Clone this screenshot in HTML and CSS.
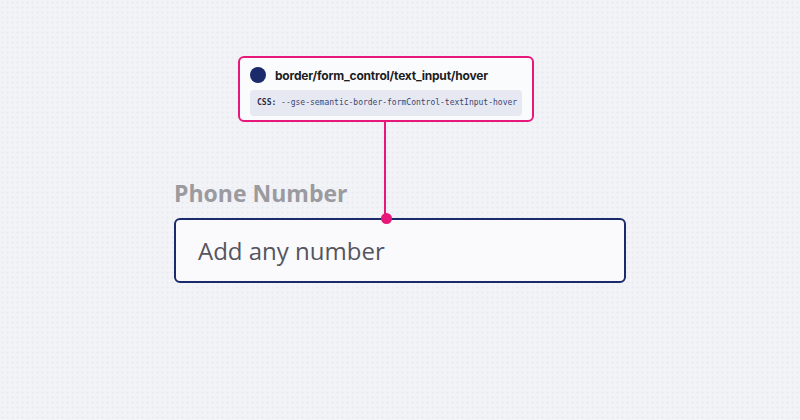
FILE: index.html
```html
<!DOCTYPE html>
<html>
<head>
<meta charset="utf-8">
<link rel="stylesheet" href="styles.css">
</head>
<body>
<div class="stage">
  <div class="annotation">
    <div class="token-card">
      <div class="token-head">
        <span class="swatch"></span>
        <span class="token-name">border/form_control/text_input/hover</span>
      </div>
      <div class="token-css"><b>CSS:</b> --gse-semantic-border-formControl-textInput-hover</div>
    </div>
    <div class="connector"></div>
  </div>
  <div class="field">
    <label class="field-label">Phone Number</label>
    <div class="input">
      <span class="pin"></span>
      <span class="placeholder">Add any number</span>
    </div>
  </div>
</div>
</body>
</html>
```
FILE: styles.css
```css
html, body {
  margin: 0;
  padding: 0;
  width: 800px;
  height: 420px;
  overflow: hidden;
}
body {
  background-color: #f2f3f7;
  background-image: radial-gradient(circle, #e7e9f0 0.8px, transparent 1.2px);
  background-size: 5px 5px;
  font-family: "Open Sans", "Noto Sans", sans-serif;
}
.stage {
  display: flex;
  flex-direction: column;
  padding-top: 56px;
  padding-left: 174px;
}
.annotation {
  display: flex;
  flex-direction: column;
  margin-left: 64px;
  width: 296px;
}
.token-card {
  box-sizing: border-box;
  width: 296px;
  height: 66px;
  border: 2px solid #e8187a;
  border-radius: 6px;
  background: #fafbfd;
  padding: 7px 10px 0 10px;
}
.token-head {
  display: flex;
  align-items: center;
  gap: 9px;
  height: 20px;
}
.swatch {
  width: 16px;
  height: 16px;
  border-radius: 50%;
  background: #1b2a6b;
  flex: none;
}
.token-name {
  font-family: Inter, "Noto Sans", sans-serif;
  font-weight: 700;
  font-size: 12px;
  letter-spacing: -0.2px;
  color: #1d1d24;
}
.token-css {
  margin-top: 5px;
  height: 26px;
  line-height: 26px;
  background: #e7e9f2;
  border-radius: 4px;
  padding-left: 7px;
  font-family: "DejaVu Sans Mono", monospace;
  font-size: 8px;
  color: #3e4470;
  white-space: nowrap;
}
.token-css b {
  color: #2a2e45;
}
.connector {
  width: 2px;
  height: 97px;
  background: #e8187a;
  margin-left: 146px;
}
.field {
  display: flex;
  flex-direction: column;
  margin-top: -37px;
  width: 452px;
}
.field-label {
  font-weight: 700;
  font-size: 23px;
  color: #9a9a9f;
  line-height: 22px;
  height: 36px;
}
.input {
  position: relative;
  box-sizing: border-box;
  height: 65px;
  border: 2px solid #1b2a6b;
  border-radius: 6px;
  background: #fafafc;
  display: flex;
  align-items: center;
  padding-left: 22px;
}
.pin {
  position: absolute;
  top: -7px;
  left: 205px;
  width: 11px;
  height: 11px;
  border-radius: 50%;
  background: #e8187a;
}
.placeholder {
  font-size: 24px;
  color: #55555f;
}
```
